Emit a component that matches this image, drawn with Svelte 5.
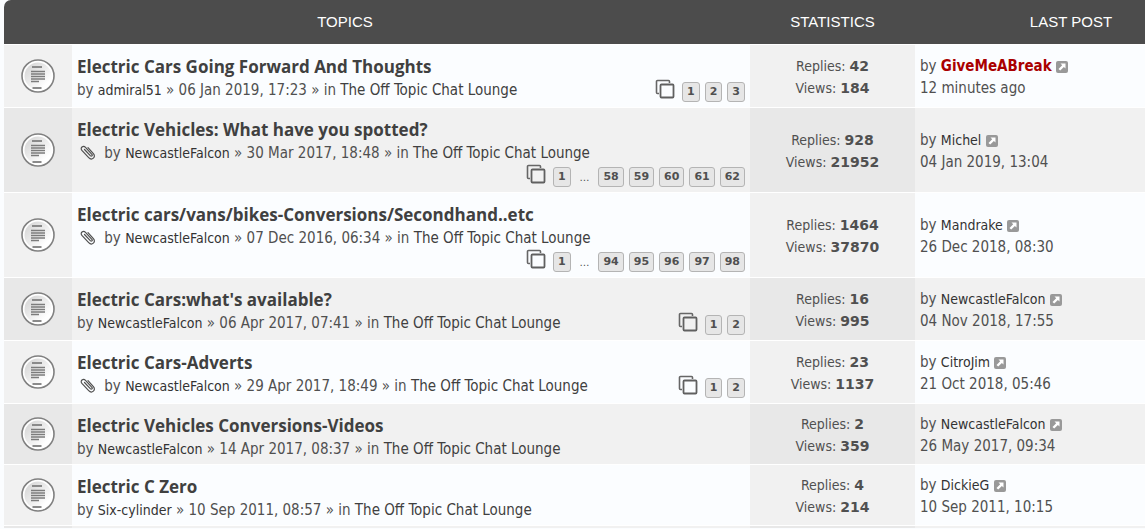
<script>
  const topics = [
    { title: 'Electric Cars Going Forward And Thoughts', author: 'admiral51', date: '06 Jan 2019, 17:23', pages: [1, 2, 3], replies: 42, views: 184, last: 'GiveMeABreak', admin: true, lastDate: '12 minutes ago' },
    { title: 'Electric Vehicles: What have you spotted?', author: 'NewcastleFalcon', date: '30 Mar 2017, 18:48', clip: true, pages: [1, '…', 58, 59, 60, 61, 62], replies: 928, views: 21952, last: 'Michel', lastDate: '04 Jan 2019, 13:04' },
    { title: 'Electric cars/vans/bikes-Conversions/Secondhand..etc', author: 'NewcastleFalcon', date: '07 Dec 2016, 06:34', clip: true, pages: [1, '…', 94, 95, 96, 97, 98], replies: 1464, views: 37870, last: 'Mandrake', lastDate: '26 Dec 2018, 08:30' },
    { title: "Electric Cars:what's available?", author: 'NewcastleFalcon', date: '06 Apr 2017, 07:41', pages: [1, 2], replies: 16, views: 995, last: 'NewcastleFalcon', lastDate: '04 Nov 2018, 17:55' },
    { title: 'Electric Cars-Adverts', author: 'NewcastleFalcon', date: '29 Apr 2017, 18:49', clip: true, pages: [1, 2], replies: 23, views: 1137, last: 'CitroJim', lastDate: '21 Oct 2018, 05:46' },
    { title: 'Electric Vehicles Conversions-Videos', author: 'NewcastleFalcon', date: '14 Apr 2017, 08:37', pages: [], replies: 2, views: 359, last: 'NewcastleFalcon', lastDate: '26 May 2017, 09:34' },
    { title: 'Electric C Zero', author: 'Six-cylinder', date: '10 Sep 2011, 08:57', pages: [], replies: 4, views: 214, last: 'DickieG', lastDate: '10 Sep 2011, 10:15' }
  ];
</script>

{#snippet topicIcon()}
  <svg class="topic-icon" width="34" height="34" viewBox="0 0 34 34" aria-hidden="true">
    <defs>
      <linearGradient id="disc" x1="0" y1="0" x2="1" y2="1">
        <stop offset="0.2" stop-color="#dcdcdc" />
        <stop offset="0.8" stop-color="#fff" />
      </linearGradient>
    </defs>
    <circle cx="17" cy="17" r="16" fill="#fff" stroke="#808080" stroke-width="1.6" />
    <circle cx="17" cy="17" r="13.5" fill="url(#disc)" />
    <path d="M11 8h10M11.500 29h9" stroke="#8a8a8a" stroke-width="2" />
    <path d="M10 12.500h14M10 15h14M10 17.500h14M10 20h14M10 22.500h8" stroke="#7c7c7c" stroke-width="1.5" />
  </svg>
{/snippet}

<table>
  <colgroup>
    <col class="c-icon" />
    <col />
    <col class="c-stats" />
    <col class="c-last" />
  </colgroup>
  <thead>
    <tr>
      <th class="h-topics" colspan="2">TOPICS</th>
      <th>STATISTICS</th>
      <th class="h-last">LAST POST</th>
    </tr>
  </thead>
  <tbody>
    {#each topics as t}
      <tr>
        <td class="icon">{@render topicIcon()}</td>
        <td class="topic">
          <a class="title" href="#topic">{t.title}</a>
          <div class="info">
            <div class="meta">
              {#if t.clip}
                <svg class="clip" width="16" height="16" viewBox="0 0 16 16" aria-hidden="true">
                  <path d="M4.500 5.500l5.800 6.200c1.200 1.200 2.700-.2 1.600-1.400L5.500 3.300C3.200.9-.3 3.900 1.900 6.400l6.800 7.300c3.200 3.300 7.700-.7 4.700-4.100L8 3.700" fill="none" stroke="#505050" stroke-width="1.2" stroke-linecap="round" />
                </svg>
              {/if}
              by <a class="user" href="#user">{t.author}</a> » {t.date} » in <a href="#forum">The Off Topic Chat Lounge</a>
            </div>
            {#if t.pages.length}
              <div class="pages">
                <svg class="copy" width="20" height="20" viewBox="0 0 20 20" aria-hidden="true">
                  <path d="M4 14.500H2.500a1 1 0 0 1-1-1v-11a1 1 0 0 1 1-1h11a1 1 0 0 1 1 1V4" fill="none" stroke="#666" stroke-width="1.6" />
                  <rect x="5.500" y="5.500" width="13" height="13" rx="1" fill="none" stroke="#606060" stroke-width="1.8" />
                </svg>
                {#each t.pages as p}
                  {#if p === '…'}
                    <span class="gap">…</span>
                  {:else}
                    <a class="page" href="#page">{p}</a>
                  {/if}
                {/each}
              </div>
            {/if}
          </div>
        </td>
        <td class="stats">
          Replies: <strong>{t.replies}</strong><br />
          Views: <strong>{t.views}</strong>
        </td>
        <td class="last">
          by <a class="user" class:admin={t.admin} href="#user">{t.last}</a>
          <a class="go" href="#last" aria-label="View the latest post">
            <svg width="12" height="12" viewBox="0 0 12 12" aria-hidden="true">
              <rect width="12" height="12" rx="2" fill="#999" />
              <path d="M4.500 2.500h5v5L7.900 5.900 4.200 9.600 2.500 7.900 6.200 4.200z" fill="#fff" />
            </svg>
          </a><br />
          {t.lastDate}
        </td>
      </tr>
    {/each}
    <tr class="more">
      <td class="icon"></td>
      <td></td>
      <td class="stats"></td>
      <td></td>
    </tr>
  </tbody>
</table>

<style>
:global(body) {
  background: #fbfdff;
}
:global(#app) {
  padding-left: 4px;
}
table {
  width: 100%;
  table-layout: fixed;
  border-collapse: separate;
  border-spacing: 0;
  color: #505050;
  font-family: "DejaVu Sans Condensed", "Noto Sans", sans-serif;
  font-size: 15px;
  line-height: 22px;
}
.c-icon {
  width: 68px;
}
.c-stats {
  width: 165px;
}
.c-last {
  width: 230px;
}
th {
  height: 44px;
  padding: 0;
  background: #4c4c4c;
  color: #fff;
  font-family: "Liberation Sans", Arial, sans-serif;
  font-size: 15px;
  font-weight: normal;
  text-align: center;
}
.h-topics {
  padding-right: 64px;
  border-top-left-radius: 7px;
}
.h-last {
  padding-left: 82px;
}
td {
  padding: 0;
  border-top: 1px solid #fff;
  background: #fbfdff;
  vertical-align: middle;
}
.icon,
.stats {
  background: #f1f1f1;
  text-align: center;
}
tr:nth-child(even) td {
  background: #f1f1f1;
}
tr:nth-child(even) .icon,
tr:nth-child(even) .stats {
  background: #e8e8e8;
}
a {
  color: #404040;
  text-decoration: none;
}
.topic-icon {
  display: block;
  margin: 0 auto;
}
.topic {
  padding: 10px 5px 3px;
  vertical-align: top;
}
.title {
  display: block;
  font-family: "Open Sans", sans-serif;
  font-size: 17px;
  font-weight: bold;
  line-height: 24px;
}
.info {
  display: flex;
  flex-wrap: wrap;
  justify-content: space-between;
}
.clip {
  margin: 0 4px 0 3px;
  vertical-align: -2px;
}
.user {
  color: #333;
  font-size: 14px;
}
.pages {
  display: flex;
  align-items: flex-end;
  gap: 5px;
  height: 23px;
  margin: 0 0 2px auto;
}
.copy {
  align-self: flex-start;
  margin-right: 2px;
}
.page {
  padding: 0 4px;
  border: 1px solid #b4b4b4;
  border-radius: 3px;
  background: #e6e6e6;
  color: #505050;
  font-family: "DejaVu Sans", sans-serif;
  font-size: 11px;
  font-weight: bold;
  line-height: 18px;
}
.gap {
  padding: 0 4px;
  font-size: 11px;
  line-height: 18px;
}
.stats,
.last {
  padding: 9px 5px 7px;
}
.stats {
  font-size: 14px;
}
strong {
  font-family: "DejaVu Sans", sans-serif;
}
.admin {
  color: #a00;
  font-size: 15px;
  font-weight: bold;
}
.go svg {
  vertical-align: -2px;
}
.more td {
  height: 2px;
  padding: 0;
}
</style>
